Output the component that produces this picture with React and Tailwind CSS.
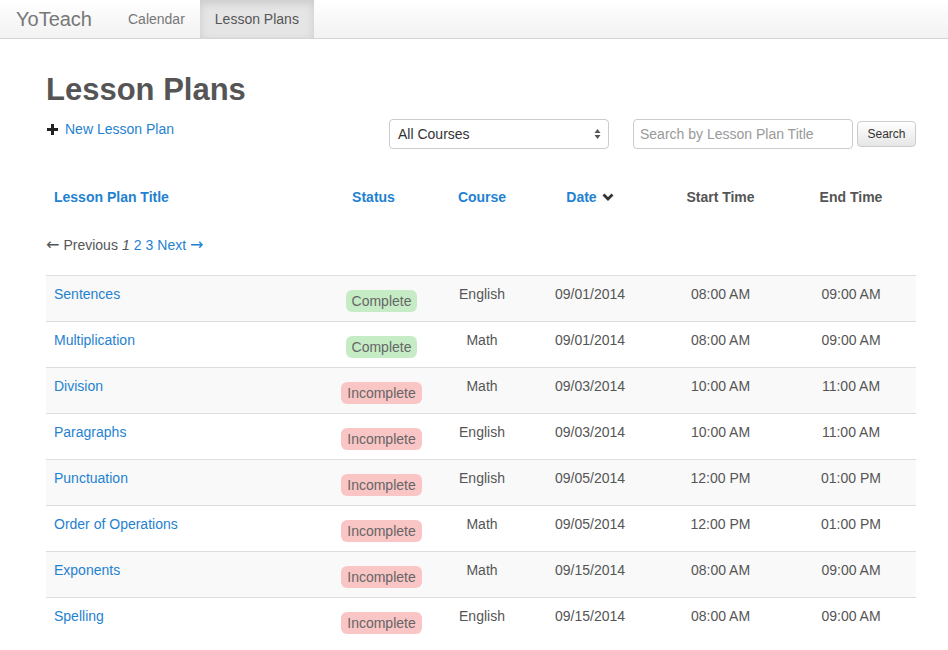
import React from "react";

const rows = [
  ["Sentences", true, "English", "09/01/2014", "08:00 AM", "09:00 AM"],
  ["Multiplication", true, "Math", "09/01/2014", "08:00 AM", "09:00 AM"],
  ["Division", false, "Math", "09/03/2014", "10:00 AM", "11:00 AM"],
  ["Paragraphs", false, "English", "09/03/2014", "10:00 AM", "11:00 AM"],
  ["Punctuation", false, "English", "09/05/2014", "12:00 PM", "01:00 PM"],
  ["Order of Operations", false, "Math", "09/05/2014", "12:00 PM", "01:00 PM"],
  ["Exponents", false, "Math", "09/15/2014", "08:00 AM", "09:00 AM"],
  ["Spelling", false, "English", "09/15/2014", "08:00 AM", "09:00 AM"],
];

const grid = "grid grid-cols-[262px_131px_86px_130px_131px_130px]";
const arrow = { fontFamily: '"DejaVu Sans", sans-serif', fontSize: "16px", lineHeight: "1" };

export default function App() {
  return (
    <div className="min-h-[650px] bg-white text-[#555] text-[14px]" style={{ fontFamily: '"Liberation Sans", Arial, sans-serif' }}>
      <nav className="h-[39px] flex items-stretch border-b border-[#d4d4d4] bg-gradient-to-b from-white to-[#f2f2f2]">
        <div className="w-[113px] pl-[16px] flex items-center text-[20px] text-[#777]">YoTeach</div>
        <div className="px-[15px] flex items-center text-[#777]">Calendar</div>
        <div className="px-[15px] flex items-center text-[#555] bg-[#e5e5e5] shadow-[inset_0_3px_8px_rgba(0,0,0,0.12)]">Lesson Plans</div>
      </nav>

      <div className="ml-[46px] w-[870px]">
        <h1 className="mt-[34px] text-[31px] leading-[34px] font-bold text-[#555]">Lesson Plans</h1>

        <div className="mt-[12px] flex items-start">
          <div className="flex items-center h-[20px] w-[343px] shrink-0">
            <svg width="11" height="11" viewBox="0 0 11 11" className="ml-[1px] mr-[7px]">
              <rect x="0" y="4" width="11" height="3" fill="#222" />
              <rect x="4" y="0" width="3" height="11" fill="#222" />
            </svg>
            <span className="text-[#1f82d1] leading-[20px]">New Lesson Plan</span>
          </div>
          <div className="w-[220px] shrink-0 h-[30px] border border-[#ccc] rounded-[4px] bg-white flex items-center justify-between pl-[8px] pr-[7px] text-[#333]">
            <span>All Courses</span>
            <svg width="7" height="12" viewBox="0 0 7 12">
              <path d="M3.5 1 L6.5 5 H0.5 Z" fill="#555" />
              <path d="M3.5 11 L6.5 7 H0.5 Z" fill="#555" />
            </svg>
          </div>
          <div className="ml-[24px] w-[220px] shrink-0 h-[30px] border border-[#ccc] rounded-[4px] bg-white flex items-center pl-[6px] text-[#999]">
            Search by Lesson Plan Title
          </div>
          <div className="ml-[4px] mt-[2px] w-[59px] shrink-0 h-[26px] border border-[#ccc] rounded-[4px] bg-gradient-to-b from-white to-[#e6e6e6] flex items-center justify-center text-[12px] text-[#333]">
            Search
          </div>
        </div>

        <div className={`${grid} mt-[38px] font-bold leading-[20px]`}>
          <div className="pl-[8px] text-[#1f82d1]">Lesson Plan Title</div>
          <div className="text-center text-[#1f82d1]">Status</div>
          <div className="text-center text-[#1f82d1]">Course</div>
          <div className="flex items-center justify-center text-[#1f82d1]">
            <span>Date</span>
            <svg width="12" height="9" viewBox="0 0 12 9" className="ml-[5px]">
              <path d="M1.5 1.5 L6 6 L10.5 1.5" stroke="#333" strokeWidth="2.8" fill="none" />
            </svg>
          </div>
          <div className="text-center">Start Time</div>
          <div className="text-center">End Time</div>
        </div>

        <div className="mt-[28px] h-[20px] leading-[20px] flex items-center gap-[4px] whitespace-pre">
          <span style={arrow}>←</span>
          <span>Previous</span>
          <em>1</em>
          <span className="text-[#1f82d1]">2</span>
          <span className="text-[#1f82d1]">3</span>
          <span className="text-[#1f82d1]">Next</span>
          <span className="text-[#1f82d1]" style={arrow}>→</span>
        </div>

        <div className="mt-[20px]">
          {rows.map((r, i) => (
            <div key={r[0]} className={`${grid} h-[46px] border-t border-[#ddd] leading-[20px] ${i % 2 === 0 ? "bg-[#f9f9f9]" : "bg-white"}`}>
              <div className="pl-[8px] pt-[8px] text-[#1f82d1]">{r[0]}</div>
              <div className="pt-[14px] flex justify-center">
                <span className={`ml-[16px] px-[6px] h-[22px] leading-[22px] rounded-[6px] text-[14px] text-[#666] ${r[1] ? "bg-[#c6ecc6]" : "bg-[#f9c5c5]"}`}>
                  {r[1] ? "Complete" : "Incomplete"}
                </span>
              </div>
              <div className="pt-[8px] text-center">{r[2]}</div>
              <div className="pt-[8px] text-center">{r[3]}</div>
              <div className="pt-[8px] text-center">{r[4]}</div>
              <div className="pt-[8px] text-center">{r[5]}</div>
            </div>
          ))}
        </div>
      </div>
    </div>
  );
}
